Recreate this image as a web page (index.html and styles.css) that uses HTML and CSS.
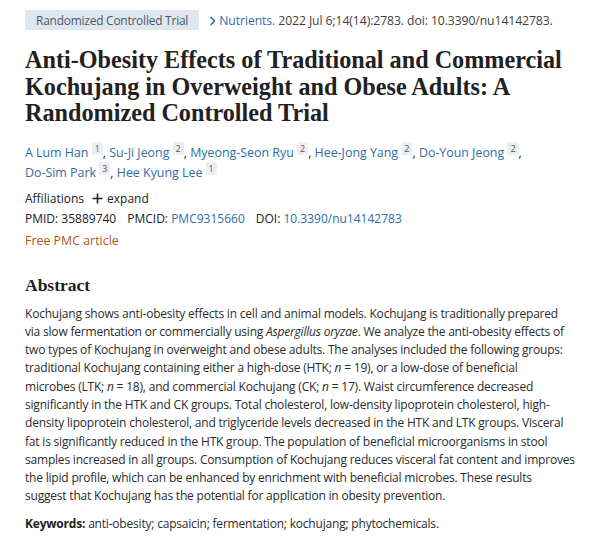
FILE: index.html
```html
<!DOCTYPE html>
<html lang="en">
<head>
<meta charset="utf-8">
<title>Anti-Obesity Effects of Traditional and Commercial Kochujang</title>
<link rel="stylesheet" href="styles.css">
</head>
<body>
<main class="article">
  <div class="heading-row">
    <span class="pub-type">Randomized Controlled Trial</span>
    <span class="cite"><svg class="chev" width="7" height="10" viewBox="0 0 7 10"><path d="M1.5 1 L5.5 5 L1.5 9" fill="none" stroke="#2e6da4" stroke-width="1.6"/></svg> <a class="link" href="#">Nutrients.</a> 2022 Jul 6;14(14):2783. doi: 10.3390/nu14142783.</span>
  </div>

  <h1 class="title">Anti-Obesity Effects of Traditional and Commercial Kochujang in Overweight and Obese Adults: A Randomized Controlled Trial</h1>

  <div class="authors">
    <span class="author"><a class="link" href="#">A Lum Han</a> <sup class="aff">1</sup>,</span> <span class="author"><a class="link" href="#">Su-Ji Jeong</a> <sup class="aff">2</sup>,</span> <span class="author"><a class="link" href="#">Myeong-Seon Ryu</a> <sup class="aff">2</sup>,</span> <span class="author"><a class="link" href="#">Hee-Jong Yang</a> <sup class="aff">2</sup>,</span> <span class="author"><a class="link" href="#">Do-Youn Jeong</a> <sup class="aff">2</sup>,</span> <span class="author"><a class="link" href="#">Do-Sim Park</a> <sup class="aff">3</sup>,</span> <span class="author"><a class="link" href="#">Hee Kyung Lee</a> <sup class="aff">1</sup></span>
  </div>

  <div class="affiliations">
    <span>Affiliations</span>
    <span class="expand"><svg width="11" height="11" viewBox="0 0 11 11"><path d="M5.5 0.5 V10.5 M0.5 5.5 H10.5" stroke="#212121" stroke-width="1.6"/></svg>expand</span>
  </div>

  <div class="ids">
    <span>PMID: 35889740</span>
    <span>PMCID: <a class="link" href="#">PMC9315660</a></span>
    <span>DOI: <a class="link" href="#">10.3390/nu14142783</a></span>
  </div>

  <div class="free">Free PMC article</div>

  <h2 class="abstract-title">Abstract</h2>
  <p class="abstract">Kochujang shows anti-obesity effects in cell and animal models. Kochujang is traditionally prepared<br>
via slow fermentation or commercially using <em>Aspergillus oryzae</em>. We analyze the anti-obesity effects of<br>
two types of Kochujang in overweight and obese adults. The analyses included the following groups:<br>
traditional Kochujang containing either a high-dose (HTK; <em>n</em> = 19), or a low-dose of beneficial<br>
microbes (LTK; <em>n</em> = 18), and commercial Kochujang (CK; <em>n</em> = 17). Waist circumference decreased<br>
significantly in the HTK and CK groups. Total cholesterol, low-density lipoprotein cholesterol, high-<br>density lipoprotein cholesterol, and triglyceride levels decreased in the HTK and LTK groups. Visceral<br>
fat is significantly reduced in the HTK group. The population of beneficial microorganisms in stool<br>
samples increased in all groups. Consumption of Kochujang reduces visceral fat content and improves<br>
the lipid profile, which can be enhanced by enrichment with beneficial microbes. These results<br>
suggest that Kochujang has the potential for application in obesity prevention.</p>

  <p class="keywords"><strong>Keywords:</strong> anti-obesity; capsaicin; fermentation; kochujang; phytochemicals.</p>
</main>
</body>
</html>
```

FILE: styles.css
```css
html, body {
  margin: 0;
  padding: 0;
  background: #ffffff;
}
body {
  font-family: "Open Sans", "Noto Sans", sans-serif;
  font-size: 12px;
  color: #212121;
}
.article {
  padding: 10px 20px 0 25px;
}
.link {
  color: #2e6da4;
  text-decoration: none;
}
.heading-row {
  display: flex;
  align-items: center;
  gap: 10px;
  height: 20px;
}
.pub-type {
  background: #dfe6ee;
  color: #4a5a6a;
  padding: 2px 11px 2px 11px;
  line-height: 16px;
  font-size: 11.9px;
  letter-spacing: -0.2px;
}
.cite {
  color: #3e3e3e;
  font-size: 12.2px;
  letter-spacing: -0.08px;
  white-space: nowrap;
}
.chev {
  display: inline-block;
  vertical-align: -1px;
}
.title {
  font-family: "Liberation Serif", serif;
  font-weight: bold;
  font-size: 24.2px;
  line-height: 26.5px;
  margin: 17px 0 0 0;
  color: #212121;
  max-width: 565px;
}
.authors {
  margin-top: 16px;
  line-height: 20px;
  font-size: 12.4px;
  max-width: 555px;
}
.author {
  white-space: nowrap;
}
.aff {
  font-size: 9px;
  background: #eceeef;
  color: #555;
  padding: 0 3px;
  vertical-align: 5px;
  line-height: 1;
}
.affiliations {
  margin-top: 6px;
  line-height: 20px;
  display: flex;
  align-items: center;
  gap: 8px;
}
.expand {
  display: flex;
  align-items: center;
  gap: 4px;
}
.ids {
  line-height: 20px;
  display: flex;
  gap: 11px;
}
.free {
  line-height: 20px;
  margin-top: 2px;
  color: #b0561e;
  font-size: 12.4px;
}
.abstract-title {
  font-family: "Liberation Serif", serif;
  font-weight: bold;
  font-size: 17.5px;
  line-height: 24px;
  margin: 22px 0 0 0;
  color: #212121;
}
.abstract {
  margin: 8px 0 0 0;
  line-height: 18.3px;
  color: #2b2b2b;
  letter-spacing: -0.2px;
  white-space: nowrap;
}
.keywords {
  margin: 9px 0 0 0;
  line-height: 18px;
  color: #2b2b2b;
  letter-spacing: -0.2px;
}
.keywords strong {
  color: #212121;
}
```
